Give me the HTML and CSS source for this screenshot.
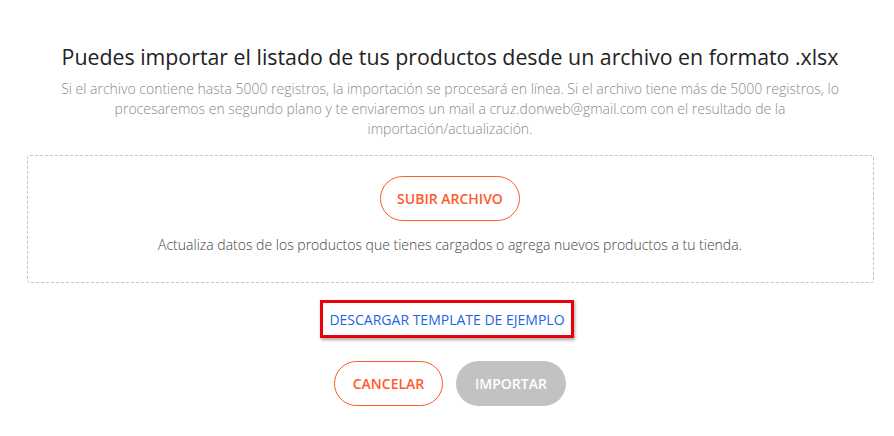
FILE: index.html
```html
<!DOCTYPE html>
<html lang="es">
<head>
<meta charset="utf-8">
<link rel="stylesheet" href="styles.css">
</head>
<body>
<main class="importer">
  <h1 class="title">Puedes importar el listado de tus productos desde un archivo en formato .xlsx</h1>
  <p class="info">Si el archivo contiene hasta 5000 registros, la importación se procesará en línea. Si el archivo tiene más de 5000 registros, lo procesaremos en segundo plano y te enviaremos un mail a cruz.donweb@gmail.com con el resultado de la importación/actualización.</p>
  <section class="dropzone">
    <button class="btn btn-outline">SUBIR ARCHIVO</button>
    <p class="hint">Actualiza datos de los productos que tienes cargados o agrega nuevos productos a tu tienda.</p>
  </section>
  <div class="template-row">
    <a class="template-link" href="#">DESCARGAR TEMPLATE DE EJEMPLO</a>
  </div>
  <div class="actions">
    <button class="btn btn-outline btn-cancel">CANCELAR</button>
    <button class="btn btn-disabled">IMPORTAR</button>
  </div>
</main>
</body>
</html>
```
FILE: styles.css
```css
html, body {
  margin: 0;
  padding: 0;
  background: #fff;
}
body {
  font-family: "Open Sans", "Liberation Sans", sans-serif;
  width: 894px;
  height: 436px;
  overflow: hidden;
}
.importer {
  display: flex;
  flex-direction: column;
  align-items: center;
  padding: 42px 20px 0 26px;
}
.title {
  margin: 0;
  font-size: 21.33px;
  font-weight: 400;
  line-height: 30px;
  color: #222;
  text-align: center;
  white-space: nowrap;
}
.info {
  margin: 7px 0 0 0;
  width: 800px;
  font-size: 14px;
  font-weight: 300;
  line-height: 20px;
  color: #8a8a8a;
  text-align: center;
}
.dropzone {
  box-sizing: border-box;
  width: 847px;
  margin-top: 16px;
  height: 128px;
  border: 1px dashed #c4c4c4;
  border-radius: 3px;
  display: flex;
  flex-direction: column;
  align-items: center;
  padding-top: 20px;
}
.btn {
  box-sizing: border-box;
  height: 45px;
  border-radius: 23px;
  font-family: "Open Sans", "Liberation Sans", sans-serif;
  font-size: 14px;
  font-weight: 600;
  padding: 0 16px;
  cursor: pointer;
}
.btn-outline {
  background: #fff;
  border: 1px solid #ff5a2a;
  color: #ff5a2a;
}
.hint {
  margin: 14px 0 0 0;
  font-size: 14px;
  font-weight: 300;
  line-height: 20px;
  color: #444;
}
.template-row {
  margin-top: 17px;
  margin-right: 6px;
  box-sizing: border-box;
  width: 254px;
  height: 38px;
  border: 3px solid #e8000b;
  box-shadow: 1px 2px 3px rgba(0,0,0,0.35);
  display: flex;
  align-items: center;
  justify-content: center;
}
.template-link {
  font-size: 14px;
  color: #1a66e6;
  text-decoration: none;
}
.actions {
  margin-top: 23px;
  display: flex;
  gap: 13px;
}
.btn-cancel {
  width: 109px;
}
.btn-disabled {
  width: 110px;
  background: #c2c2c2;
  border: none;
  color: #fff;
}
```
